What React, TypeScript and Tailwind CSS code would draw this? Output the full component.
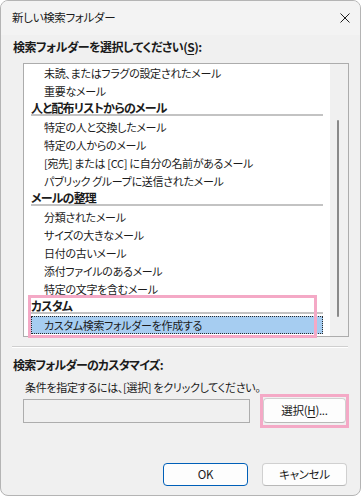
import React from 'react';

const jp = "font-['Noto_Sans_CJK_JP',sans-serif] [font-feature-settings:'palt']";

type Row = { kind: 'item' | 'header' | 'selected'; text: string };

const rows: Row[] = [
  { kind: 'item', text: '未読、またはフラグの設定されたメール' },
  { kind: 'item', text: '重要なメール' },
  { kind: 'header', text: '人と配布リストからのメール' },
  { kind: 'item', text: '特定の人と交換したメール' },
  { kind: 'item', text: '特定の人からのメール' },
  { kind: 'item', text: '[宛先] または [CC] に自分の名前があるメール' },
  { kind: 'item', text: 'パブリック グループに送信されたメール' },
  { kind: 'header', text: 'メールの整理' },
  { kind: 'item', text: '分類されたメール' },
  { kind: 'item', text: 'サイズの大きなメール' },
  { kind: 'item', text: '日付の古いメール' },
  { kind: 'item', text: '添付ファイルのあるメール' },
  { kind: 'item', text: '特定の文字を含むメール' },
  { kind: 'header', text: 'カスタム' },
  { kind: 'selected', text: 'カスタム検索フォルダーを作成する' },
];

function ListRow({ row }: { row: Row }) {
  if (row.kind === 'header') {
    return (
      <div className="h-[18px] px-[7px] flex flex-col">
        <div className="h-[14px] leading-[16px] text-[12px] tracking-[-0.8px] font-bold whitespace-nowrap">{row.text}</div>
        <div className="h-[2px] bg-[#c3c3c3]" />
      </div>
    );
  }
  if (row.kind === 'selected') {
    return (
      <div className="h-[18px] px-[7px]">
        <div className="h-[18px] bg-[#a6cdf1] border border-dotted border-[#2a2a2a] pl-[12px] leading-[16px] whitespace-nowrap">
          {row.text}
        </div>
      </div>
    );
  }
  return <div className="h-[18px] pl-[20px] leading-[18px] whitespace-nowrap">{row.text}</div>;
}

export default function App() {
  return (
    <div className={`relative w-[361px] h-[496px] rounded-[8px] border border-[#b4b4b4] overflow-hidden bg-[#f0f0f0] text-[11px] tracking-[-0.3px] text-[#1b1b1b] ${jp}`}>
      {/* Title bar */}
      <div className="h-[34px] bg-[#f3f3f3] flex items-center justify-between pl-[11px] pr-[10px]">
        <span className="text-[11.5px]">新しい検索フォルダー</span>
        <svg width="10" height="10" viewBox="0 0 10 10" className="block">
          <path d="M0.5 0.5 L9.5 9.5 M9.5 0.5 L0.5 9.5" stroke="#1f1f1f" strokeWidth="1" fill="none" />
        </svg>
      </div>

      <div className="mt-[3px] h-[18px] leading-[18px] pl-[12px] text-[12px] tracking-[-0.5px] font-bold">
        検索フォルダーを選択してください(<span className="underline underline-offset-2">S</span>):
      </div>

      {/* List box */}
      <div className="mt-[7px] ml-[22px] w-[326px] h-[274px] border border-[#acacac] bg-white flex">
        <div className="w-[306px] flex flex-col">
          {rows.map((r, i) => (
            <ListRow key={i} row={r} />
          ))}
        </div>
        <div className="w-[18px] bg-[#f0f0f0] flex flex-col">
          <div className="mt-[56px] ml-[7px] w-[2px] h-[197px] rounded-full bg-[#8a8a8a]" />
        </div>
      </div>

      {/* Separator */}
      <div className="mt-[9px] ml-[11px] w-[336px] h-px bg-[#cfcfcf]" />
      <div className="ml-[11px] w-[336px] h-px bg-white" />

      <div className="mt-[8px] h-[18px] leading-[18px] pl-[12px] text-[12px] tracking-[-0.8px] font-bold">検索フォルダーのカスタマイズ:</div>
      <div className="mt-[4px] h-[18px] leading-[18px] pl-[24px]">条件を指定するには、[選択] をクリックしてください。</div>

      <div className="mt-[2px] h-[25px] flex">
        <div className="mt-[1px] ml-[22px] w-[227px] h-[24px] border border-[#adadad] bg-[#f0f0f0]" />
        <div className="ml-[13px] w-[83px] h-[25px] rounded-[4px] border border-[#d0d0d0] border-b-[#b8b8b8] bg-[#fdfdfd] flex items-center justify-center text-[11.5px]">
          選択(<span className="underline underline-offset-2">H</span>)...
        </div>
      </div>

      <div className="mt-[40px] h-[23px] flex text-[11.5px]">
        <div className="ml-[162px] w-[85px] h-[23px] rounded-[4px] border border-[#005fb8] bg-[#fdfdfd] flex items-center justify-center">
          OK
        </div>
        <div className="ml-[14px] w-[85px] h-[23px] rounded-[4px] border border-[#d0d0d0] border-b-[#b8b8b8] bg-[#fdfdfd] flex items-center justify-center">
          キャンセル
        </div>
      </div>

      {/* Annotation highlights */}
      <div className="absolute left-[27px] top-[294px] w-[289px] h-[43px] border-[3px] border-[#f4a9c6]" />
      <div className="absolute left-[259px] top-[393px] w-[89px] h-[34px] border-[3px] border-[#f4a9c6]" />
    </div>
  );
}
